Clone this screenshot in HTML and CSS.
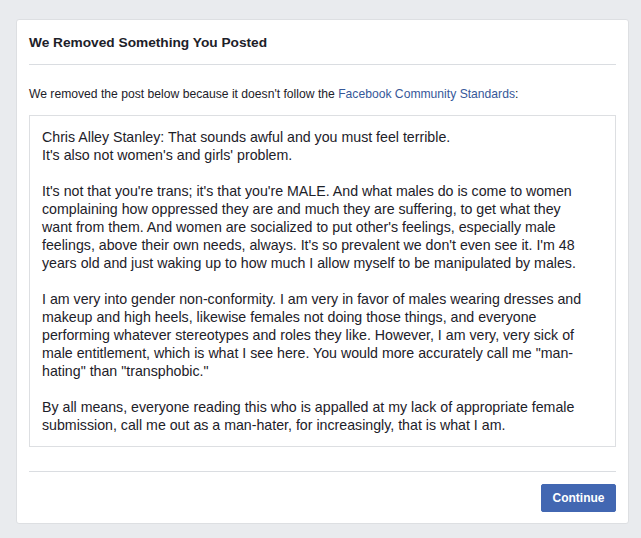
FILE: index.html
```html
<!DOCTYPE html>
<html>
<head>
<meta charset="utf-8">
<link rel="stylesheet" href="styles.css">
</head>
<body>
<div class="card">
  <div class="header">We Removed Something You Posted</div>
  <div class="body">
    <p class="desc">We removed the post below because it doesn't follow the <a href="#">Facebook Community Standards</a>:</p>
    <div class="post">
      <p>Chris Alley Stanley: That sounds awful and you must feel terrible.<br>It's also not women's and girls' problem.</p>
      <p>It's not that you're trans; it's that you're MALE. And what males do is come to women<br>complaining how oppressed they are and much they are suffering, to get what they<br>want from them. And women are socialized to put other's feelings, especially male<br>feelings, above their own needs, always. It's so prevalent we don't even see it. I'm 48<br>years old and just waking up to how much I allow myself to be manipulated by males.</p>
      <p>I am very into gender non-conformity. I am very in favor of males wearing dresses and<br>makeup and high heels, likewise females not doing those things, and everyone<br>performing whatever stereotypes and roles they like. However, I am very, very sick of<br>male entitlement, which is what I see here. You would more accurately call me "man-<br>hating" than "transphobic."</p>
      <p>By all means, everyone reading this who is appalled at my lack of appropriate female<br>submission, call me out as a man-hater, for increasingly, that is what I am.</p>
    </div>
  </div>
  <div class="footer">
    <button class="btn">Continue</button>
  </div>
</div>
</body>
</html>
```

FILE: styles.css
```css
html, body {
  margin: 0;
  padding: 0;
  background: #e9ebee;
  font-family: "Liberation Sans", Arial, sans-serif;
  color: #1d2129;
}
body {
  padding: 19px 12px 14px 16px;
}
.card {
  width: 611px;
  background: #fff;
  border: 1px solid #dddfe2;
  border-radius: 3px;
}
.header {
  margin: 0 12px;
  padding: 13px 0 11px;
  border-bottom: 1px solid #dadde1;
  font-size: 13.7px;
  font-weight: bold;
  line-height: 20px;
}
.body {
  padding: 21px 12px 24px;
}
.desc {
  margin: 0 0 13px;
  font-size: 12.15px;
  line-height: 16px;
}
.desc a {
  color: #365899;
  text-decoration: none;
}
.post {
  border: 1px solid #dddfe2;
  padding: 12px;
  font-size: 14.2px;
  line-height: 18px;
}
.post p {
  margin: 0 0 18px;
}
.post p:last-child {
  margin-bottom: 0;
}
.footer {
  margin: 0 12px;
  padding: 12px 0 11px;
  border-top: 1px solid #dadde1;
  display: flex;
  justify-content: flex-end;
}
.btn {
  background: #4267b2;
  border: 1px solid #4267b2;
  border-radius: 2px;
  color: #fff;
  font-family: "Liberation Sans", Arial, sans-serif;
  font-weight: bold;
  font-size: 12px;
  height: 28px;
  width: 75px;
  padding: 0;
}
```
